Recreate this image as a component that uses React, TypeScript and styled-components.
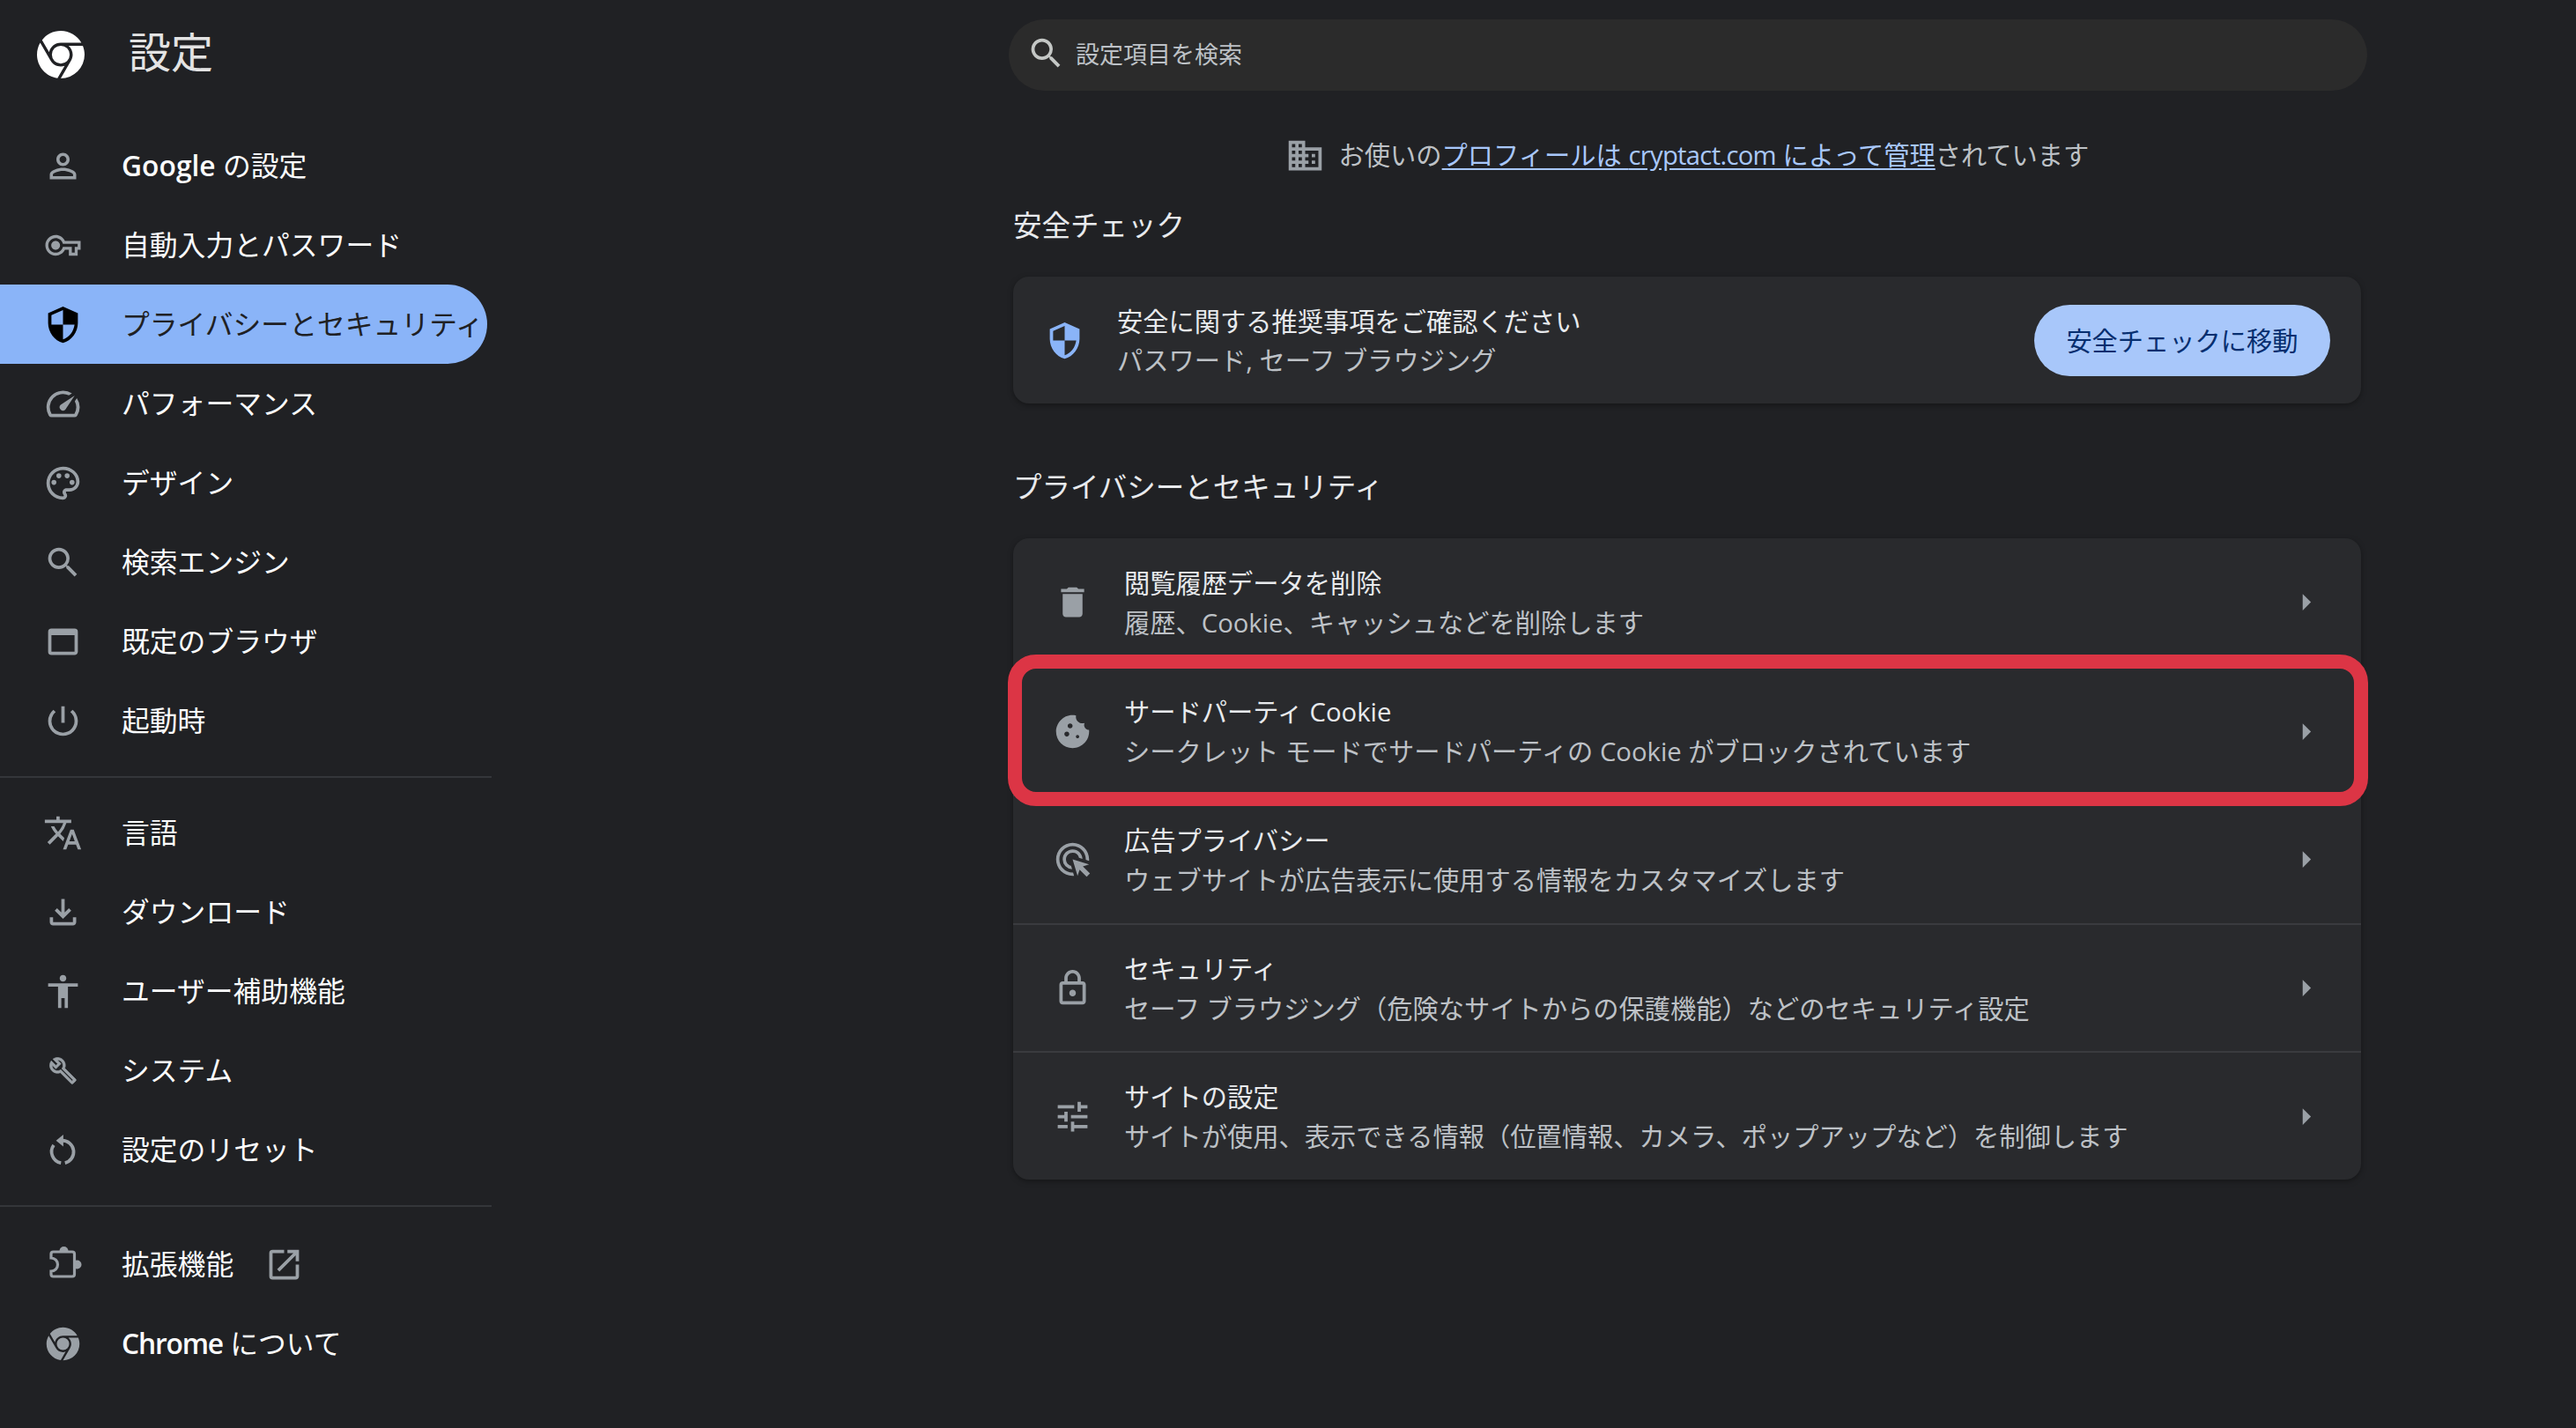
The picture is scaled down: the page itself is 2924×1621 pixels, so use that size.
import React from "react";
import styled, { createGlobalStyle } from "styled-components";

const Global = createGlobalStyle`
  html, body { margin: 0; padding: 0; background: #202124; }
  body { font-family: "Open Sans", "Noto Sans CJK JP", sans-serif; color: #e8eaed; }
  * { box-sizing: border-box; }
`;

const CHROME_D =
  "M12,20L15.46,14H15.45C15.79,13.41 16,12.73 16,12C16,10.8 15.46,9.73 14.62,9H19.41C19.79,9.93 20,10.94 20,12A8,8 0 0,1 12,20M4,12C4,10.54 4.39,9.18 5.07,8L8.54,14H8.55C9.24,15.19 10.5,16 12,16C12.45,16 12.88,15.91 13.29,15.77L10.89,19.91C7,19.37 4,16.04 4,12M15,12A3,3 0 0,1 12,15A3,3 0 0,1 9,12A3,3 0 0,1 12,9A3,3 0 0,1 15,12M12,4C14.96,4 17.54,5.61 18.92,8H12C10.06,8 8.45,9.38 8.08,11.21L5.7,7.08C7.16,5.21 9.44,4 12,4Z";

const P = {
  person: "M12 5.9c1.16 0 2.1.94 2.1 2.1s-.94 2.1-2.1 2.1S9.9 9.16 9.9 8s.94-2.1 2.1-2.1m0 9c2.97 0 6.1 1.46 6.1 2.1v1.1H5.9V17c0-.64 3.13-2.1 6.1-2.1M12 4C9.79 4 8 5.79 8 8s1.79 4 4 4 4-1.79 4-4-1.79-4-4-4zm0 9c-2.67 0-8 1.34-8 4v3h16v-3c0-2.66-5.33-4-8-4z",
  key: "M22 19h-6v-4h-2.68c-1.14 2.42-3.6 4-6.32 4-3.86 0-7-3.14-7-7s3.14-7 7-7c2.72 0 5.17 1.58 6.32 4H24v6h-2v4zm-4-2h2v-4h2v-2H11.94l-.23-.67C11.01 8.34 9.11 7 7 7c-2.76 0-5 2.24-5 5s2.24 5 5 5c2.11 0 4.01-1.34 4.71-3.33l.23-.67H18v4zM7 15c-1.65 0-3-1.35-3-3s1.35-3 3-3 3 1.35 3 3-1.35 3-3 3z",
  shield: "M12 1L3 5v6c0 5.55 3.84 10.74 9 12 5.16-1.26 9-6.45 9-12V5l-9-4zm0 10.99h7c-.53 4.12-3.28 7.79-7 8.94V12H5V6.3l7-3.11v8.8z",
  speed: "M20.38 8.57l-1.23 1.85a8 8 0 0 1-.22 7.58H5.07A8 8 0 0 1 15.58 6.85l1.85-1.23A10 10 0 0 0 3.35 19a2 2 0 0 0 1.72 1h13.85a2 2 0 0 0 1.74-1 10 10 0 0 0-.27-10.44zm-9.79 6.84a2 2 0 0 0 2.83 0l5.66-8.49-8.49 5.66a2 2 0 0 0 0 2.83z",
  palette: "M12 22C6.49 22 2 17.51 2 12S6.49 2 12 2s10 4.04 10 9c0 3.31-2.69 6-6 6h-1.77c-.28 0-.5.22-.5.5 0 .12.05.23.13.33.41.47.64 1.06.64 1.67 0 1.38-1.12 2.5-2.5 2.5zm0-18c-4.41 0-8 3.59-8 8s3.59 8 8 8c.28 0 .5-.22.5-.5 0-.16-.08-.28-.14-.35-.41-.46-.63-1.05-.63-1.65 0-1.38 1.12-2.5 2.5-2.5H16c2.21 0 4-1.79 4-4 0-3.86-3.59-7-8-7zM6.5 10a1.5 1.5 0 1 0 0 3 1.5 1.5 0 0 0 0-3zm3-4a1.5 1.5 0 1 0 0 3 1.5 1.5 0 0 0 0-3zm5 0a1.5 1.5 0 1 0 0 3 1.5 1.5 0 0 0 0-3zm3 4a1.5 1.5 0 1 0 0 3 1.5 1.5 0 0 0 0-3z",
  search: "M15.5 14h-.79l-.28-.27A6.471 6.471 0 0 0 16 9.5 6.5 6.5 0 1 0 9.5 16c1.61 0 3.09-.59 4.23-1.57l.27.28v.79l5 4.99L20.49 19l-4.99-5zm-6 0C7.01 14 5 11.99 5 9.5S7.01 5 9.5 5 14 7.01 14 9.5 11.99 14 9.5 14z",
  browser: "M19 4H5a2 2 0 0 0-2 2v12a2 2 0 0 0 2 2h14c1.1 0 2-.9 2-2V6a2 2 0 0 0-2-2zm0 14H5V8h14v10z",
  power: "M13 3h-2v10h2V3zm4.83 2.17l-1.42 1.42A6.92 6.92 0 0 1 19 12c0 3.87-3.13 7-7 7A6.995 6.995 0 0 1 7.58 6.58L6.17 5.17A8.932 8.932 0 0 0 3 12a9 9 0 0 0 18 0c0-2.74-1.23-5.18-3.17-6.83z",
  translate: "M12.87 15.07l-2.54-2.51.03-.03A17.52 17.52 0 0 0 14.07 6H17V4h-7V2H8v2H1v1.99h11.17C11.5 7.92 10.44 9.75 9 11.35 8.07 10.32 7.3 9.19 6.69 8h-2c.73 1.63 1.73 3.17 2.98 4.56l-5.09 5.02L4 19l5-5 3.11 3.11.76-2.04zM18.5 10h-2L12 22h2l1.12-3h4.75L21 22h2l-4.5-12zm-2.62 7l1.62-4.33L19.12 17h-3.24z",
  download: "M18 15v3H6v-3H4v3c0 1.1.9 2 2 2h12c1.1 0 2-.9 2-2v-3h-2zm-1-4l-1.41-1.41L13 12.17V4h-2v8.17L8.41 9.59 7 11l5 5 5-5z",
  access: "M12 2c1.1 0 2 .9 2 2s-.9 2-2 2-2-.9-2-2 .9-2 2-2zm9 7h-6v13h-2v-6h-2v6H9V9H3V7h18v2z",
  wrench: "M22.61 18.99l-9.08-9.08c.93-2.34.45-5.1-1.44-7C9.79.61 6.21.4 3.66 2.26L7.5 6.11 6.08 7.52 2.25 3.69C.39 6.23.6 9.82 2.9 12.11c1.86 1.86 4.57 2.35 6.89 1.48l9.11 9.11c.39.39 1.02.39 1.41 0l2.3-2.3c.4-.38.4-1.01 0-1.41zm-3 1.6l-9.46-9.46c-.61.45-1.29.72-2 .82-1.36.2-2.79-.21-3.83-1.25C3.37 9.76 2.93 8.5 3 7.26l3.09 3.09 4.24-4.24-3.09-3.09c1.24-.07 2.49.37 3.44 1.31 1.08 1.08 1.49 2.57 1.24 3.96-.12.71-.42 1.37-.88 1.96l9.45 9.45-.88.88z",
  open: "M19 19H5V5h7V3H5a2 2 0 0 0-2 2v14a2 2 0 0 0 2 2h14c1.1 0 2-.9 2-2v-7h-2v7zM14 3v2h3.59l-9.83 9.83 1.41 1.41L19 6.41V10h2V3h-7z",
  trash: "M6 19c0 1.1.9 2 2 2h8c1.1 0 2-.9 2-2V7H6v12zM19 4h-3.5l-1-1h-5l-1 1H5v2h14V4z",
  cookie: "M21.95 10.99c-1.79-.03-3.7-1.95-2.68-4.22-2.97 1-5.78-1.59-5.19-4.56C7.11.74 2 6.41 2 12c0 5.52 4.48 10 10 10 5.89 0 10.54-5.08 9.95-11.01zM8.5 15c-.83 0-1.5-.67-1.5-1.5S7.67 12 8.5 12s1.5.67 1.5 1.5S9.33 15 8.5 15zm2-5C9.67 10 9 9.33 9 8.5S9.67 7 10.5 7s1.5.67 1.5 1.5-.67 1.5-1.5 1.5zm4.5 6c-.55 0-1-.45-1-1s.45-1 1-1 1 .45 1 1-.45 1-1 1z",
  ads: "M11.71 17.99A5.993 5.993 0 0 1 6 12c0-3.31 2.69-6 6-6 3.22 0 5.84 2.53 5.99 5.71l-2.1-.63A3.999 3.999 0 0 0 12 8c-2.21 0-4 1.79-4 4 0 1.89 1.31 3.47 3.08 3.89l.63 2.1zM22 12c0 .3-.01.6-.04.9l-1.97-.59c.01-.1.01-.21.01-.31 0-4.42-3.58-8-8-8s-8 3.58-8 8 3.58 8 8 8c.1 0 .21 0 .31-.01l.59 1.97c-.3.03-.6.04-.9.04-5.52 0-10-4.48-10-10S6.48 2 12 2s10 4.48 10 10zm-3.77 4.26L22 15l-10-3 3 10 1.26-3.77 4.27 4.27 1.98-1.98-4.28-4.26z",
  lock: "M18 8h-1V6c0-2.76-2.24-5-5-5S7 3.24 7 6v2H6c-1.1 0-2 .9-2 2v10c0 1.1.9 2 2 2h12c1.1 0 2-.9 2-2V10c0-1.1-.9-2-2-2zm-9-2c0-1.66 1.34-3 3-3s3 1.34 3 3v2H9V6zm9 14H6V10h12v10zm-6-3c1.1 0 2-.9 2-2s-.9-2-2-2-2 .9-2 2 .9 2 2 2z",
  tune: "M3 17v2h6v-2H3zM3 5v2h10V5H3zm10 16v-2h8v-2h-8v-2h-2v6h2zM7 9v2H3v2h4v2h2V9H7zm14 4v-2H11v2h10zm-6-4h2V7h4V5h-4V3h-2v6z",
  domain: "M12 7V3H2v18h20V7H12zM6 19H4v-2h2v2zm0-4H4v-2h2v2zm0-4H4V9h2v2zm0-4H4V5h2v2zm4 12H8v-2h2v2zm0-4H8v-2h2v2zm0-4H8V9h2v2zm0-4H8V5h2v2zm10 12h-8v-2h2v-2h-2v-2h2v-2h-2V9h8v10zm-2-8h-2v2h2v-2zm0 4h-2v2h2v-2z",
  arrow: "M10 17l5-5-5-5v10z",
};

const Svg = styled.svg<{ $size?: number; $color?: string }>`
  width: ${(p) => p.$size ?? 45}px;
  height: ${(p) => p.$size ?? 45}px;
  flex: none;
  display: block;
  fill: ${(p) => p.$color ?? "#9aa0a6"};
`;

const Icon = ({ name, size, color }: { name: keyof typeof P; size?: number; color?: string }) => (
  <Svg viewBox="0 0 24 24" $size={size} $color={color}><path d={P[name]} /></Svg>
);

const KeyIcon = () => (
  <Svg viewBox="-1.5 -1.5 27 27"><path d={P.key} /></Svg>
);

const WrenchIcon = () => (
  <Svg viewBox="-4.5 -4.5 33 33">
    <path d={P.wrench} stroke="#9aa0a6" strokeWidth="0.5" />
  </Svg>
);

const ChromeIcon = ({ size, color, tight }: { size?: number; color?: string; tight?: boolean }) => (
  <Svg viewBox={tight ? "2 2 20 20" : "0 0 24 24"} $size={size} $color={color}>
    <path d={CHROME_D} transform="translate(12 12) scale(1.25) translate(-12 -12)" />
  </Svg>
);

const ResetIcon = () => (
  <Svg viewBox="0 0 24 24">
    <path d="M12.2 2.6 L7.8 6.2 L12.2 9.8 Z" />
    <path d="M11.5 6.2 A6.9 6.9 0 0 1 13.2 19.8 M10.8 19.8 A6.9 6.9 0 0 1 6.4 9" fill="none" stroke="#9aa0a6" strokeWidth="2" />
  </Svg>
);

const PuzzleIcon = () => (
  <Svg viewBox="0 0 45 45">
    <circle cx="23.5" cy="7" r="5" />
    <circle cx="38.5" cy="22.5" r="5" />
    <path
      d="M11.5 8H33a2.5 2.5 0 0 1 2.5 2.5V33.5a2.5 2.5 0 0 1-2.5 2.5H11.5a2.5 2.5 0 0 1-2.5-2.5V30A7.5 7.5 0 0 0 9 15V10.5A2.5 2.5 0 0 1 11.5 8Z"
      fill="#202124"
      stroke="#9aa0a6"
      strokeWidth="3.2"
    />
  </Svg>
);

const Page = styled.div`
  display: flex;
  width: 2924px;
  height: 1621px;
  background: #202124;
  overflow: hidden;
`;

const Sidebar = styled.nav`
  width: 558px;
  flex: none;
  display: flex;
  flex-direction: column;
`;

const Brand = styled.div`
  height: 143px;
  padding: 35px 0 0 42px;
  display: flex;
  align-items: flex-start;
  gap: 50px;
`;

const BrandTitle = styled.h1`
  margin: -8px 0 0;
  font-size: 48px;
  line-height: 64px;
  font-weight: 400;
  color: #e3e3e3;
`;

const NavItem = styled.div<{ $active?: boolean }>`
  width: 553px;
  height: 90px;
  padding-left: 49px;
  display: flex;
  align-items: center;
  gap: 44px;
  font-size: 31.8px;
  white-space: nowrap;
  color: ${(p) => (p.$active ? "#202124" : "#fbfcfd")};
  background: ${(p) => (p.$active ? "#8ab4f8" : "transparent")};
  border-radius: 0 45px 45px 0;
`;

const NavLabel = styled.span`
  margin-bottom: 4px;
`;

const Latin = styled.span<{ $tight?: boolean }>`
  font-weight: 600;
  letter-spacing: ${(p) => (p.$tight ? "-1.2px" : "0")};
`;

const OpenGlyph = styled.span`
  margin-left: -9px;
  display: block;
`;

const NavRule = styled.div<{ $after: number }>`
  width: 558px;
  height: 2px;
  margin: 18px 0 ${(p) => p.$after}px;
  background: #34363a;
`;

const Main = styled.main`
  width: 1530px;
  margin-left: 592px;
  display: flex;
  flex-direction: column;
`;

const SearchBar = styled.div`
  width: 1542px;
  height: 81px;
  margin: 22px 0 0 -5px;
  padding: 0 0 4px 20px;
  display: flex;
  align-items: center;
  gap: 11px;
  background: #2b2b2b;
  border-radius: 41px;
  font-size: 27px;
  color: #bdc1c6;
`;

const ManagedLine = styled.div`
  margin-top: 51px;
  height: 44px;
  display: flex;
  align-items: center;
  justify-content: center;
  gap: 16px;
  font-size: 29.25px;
  color: #bdc1c6;
  white-space: nowrap;
`;

const ManagedText = styled.span`
  margin-bottom: 4px;
`;

const ManagedLink = styled.span`
  color: #a8c7fa;
  text-decoration: underline;
  text-underline-offset: 4px;
`;

const Domain = styled.span`
  letter-spacing: -0.7px;
`;

const Heading = styled.h2<{ $top: number; $bottom: number }>`
  margin: ${(p) => p.$top}px 0 ${(p) => p.$bottom}px;
  height: 44px;
  font-size: 32.5px;
  line-height: 44px;
  font-weight: 400;
  color: #e8eaed;
`;

const Card = styled.section`
  background: #292a2d;
  border-radius: 18px;
  box-shadow: 0 2px 6px rgba(0, 0, 0, 0.35);
`;

const SafetyCard = styled(Card)`
  height: 144px;
  padding: 0 35px 0 36px;
  display: flex;
  align-items: center;
`;

const TextStack = styled.div`
  flex: 1;
  display: flex;
  flex-direction: column;
  min-width: 0;
`;

const SafetyText = styled(TextStack)`
  margin: 2px 0 0 37px;
  gap: 4px;
`;

const RowText = styled(TextStack)`
  gap: 5px;
  margin-top: 1px;
`;

const Title = styled.div`
  font-size: 29.25px;
  line-height: 40px;
  color: #e8eaed;
  white-space: nowrap;
`;

const Sub = styled.div`
  font-size: 29.25px;
  line-height: 40px;
  color: #bdc1c6;
  white-space: nowrap;
`;

const PrimaryButton = styled.div`
  width: 336px;
  height: 81px;
  flex: none;
  padding-bottom: 1px;
  display: flex;
  align-items: center;
  justify-content: center;
  background: #a8c7fa;
  color: #062e6f;
  font-size: 29.25px;
  border-radius: 41px;
`;

const Row = styled.div<{ $rule?: boolean }>`
  position: relative;
  height: 145.6px;
  padding: 0 40px 0 45px;
  display: flex;
  align-items: center;
  gap: 36px;
  border-top: ${(p) => (p.$rule ? "2px solid #3a3b3f" : "0 none")};
`;

const Highlight = styled.div`
  position: absolute;
  top: -16px;
  left: -6px;
  right: -8px;
  bottom: -13px;
  border: 16px solid #dc3545;
  border-radius: 32px;
  pointer-events: none;
  z-index: 2;
`;

const primary = [
  { icon: <Icon name="person" />, text: <><Latin>Google</Latin> の設定</> },
  { icon: <KeyIcon />, text: "自動入力とパスワード" },
  { icon: <Icon name="shield" color="#000" />, text: "プライバシーとセキュリティ", active: true },
  { icon: <Icon name="speed" />, text: "パフォーマンス" },
  { icon: <Icon name="palette" />, text: "デザイン" },
  { icon: <Icon name="search" />, text: "検索エンジン" },
  { icon: <Icon name="browser" />, text: "既定のブラウザ" },
  { icon: <Icon name="power" />, text: "起動時" },
];

const secondary = [
  { icon: <Icon name="translate" />, text: "言語" },
  { icon: <Icon name="download" />, text: "ダウンロード" },
  { icon: <Icon name="access" />, text: "ユーザー補助機能" },
  { icon: <WrenchIcon />, text: "システム" },
  { icon: <ResetIcon />, text: "設定のリセット" },
];

const rows: { icon: keyof typeof P; title: string; sub: string; rule?: boolean; mark?: boolean }[] = [
  { icon: "trash", title: "閲覧履歴データを削除", sub: "履歴、Cookie、キャッシュなどを削除します" },
  { icon: "cookie", title: "サードパーティ Cookie", sub: "シークレット モードでサードパーティの Cookie がブロックされています", rule: true, mark: true },
  { icon: "ads", title: "広告プライバシー", sub: "ウェブサイトが広告表示に使用する情報をカスタマイズします", rule: true },
  { icon: "lock", title: "セキュリティ", sub: "セーフ ブラウジング（危険なサイトからの保護機能）などのセキュリティ設定", rule: true },
  { icon: "tune", title: "サイトの設定", sub: "サイトが使用、表示できる情報（位置情報、カメラ、ポップアップなど）を制御します", rule: true },
];

export default function App() {
  return (
    <Page>
      <Global />
      <Sidebar>
        <Brand>
          <ChromeIcon size={54} color="#fff" tight />
          <BrandTitle>設定</BrandTitle>
        </Brand>
        {primary.map((it, i) => (
          <NavItem key={i} $active={it.active}>{it.icon}<NavLabel>{it.text}</NavLabel></NavItem>
        ))}
        <NavRule $after={17} />
        {secondary.map((it, i) => (
          <NavItem key={i}>{it.icon}<NavLabel>{it.text}</NavLabel></NavItem>
        ))}
        <NavRule $after={20} />
        <NavItem>
          <PuzzleIcon />
          <NavLabel>拡張機能</NavLabel>
          <OpenGlyph><Icon name="open" /></OpenGlyph>
        </NavItem>
        <NavItem>
          <ChromeIcon />
          <NavLabel><Latin $tight>Chrome</Latin> について</NavLabel>
        </NavItem>
      </Sidebar>
      <Main>
        <SearchBar>
          <Icon name="search" size={45} color="#c4c7c5" />
          <span>設定項目を検索</span>
        </SearchBar>
        <ManagedLine>
          <Icon name="domain" size={45} />
          <ManagedText>お使いの<ManagedLink>プロフィールは <Domain>cryptact.com</Domain> によって管理</ManagedLink>されています</ManagedText>
        </ManagedLine>
        <Heading $top={36} $bottom={36}>安全チェック</Heading>
        <SafetyCard>
          <Icon name="shield" size={45} color="#8ab4f8" />
          <SafetyText>
            <Title>安全に関する推奨事項をご確認ください</Title>
            <Sub>パスワード, セーフ ブラウジング</Sub>
          </SafetyText>
          <PrimaryButton>安全チェックに移動</PrimaryButton>
        </SafetyCard>
        <Heading $top={73} $bottom={36}>プライバシーとセキュリティ</Heading>
        <Card>
          {rows.map((r) => (
            <Row key={r.title} $rule={r.rule}>
              <Icon name={r.icon} />
              <RowText>
                <Title>{r.title}</Title>
                <Sub>{r.sub}</Sub>
              </RowText>
              <Icon name="arrow" />
              {r.mark && <Highlight />}
            </Row>
          ))}
        </Card>
      </Main>
    </Page>
  );
}
